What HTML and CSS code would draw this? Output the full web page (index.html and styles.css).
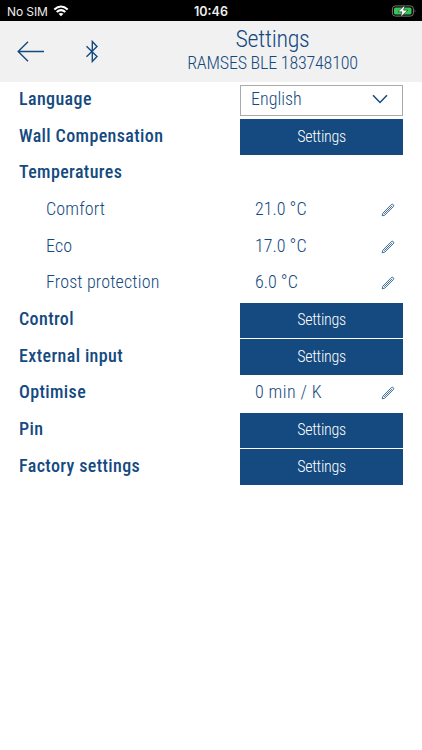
FILE: index.html
```html
<!DOCTYPE html>
<html lang="en">
<head>
  <meta charset="UTF-8" />
  <meta name="viewport" content="width=device-width, initial-scale=1.0"/>
  <title>Settings</title>
  <link rel="stylesheet" href="styles.css">
</head>
<body>
  <svg width="0" height="0" class="defs">
    <symbol id="pencil" viewBox="0 0 14 14">
      <path d="M1.2 12.8 L1.9 10.2 L10.3 1.6 Q11.3 .8 12.3 1.7 Q13.1 2.6 12.4 3.6 L3.8 12.1 Z M3.2 10.8 L11.2 2.9" />
    </symbol>
  </svg>

  <div class="statusbar">
    <div class="carrier">
      <span>No SIM</span>
      <svg class="wifi" width="16" height="12" viewBox="0 0 16 12">
        <path d="M1.3 4.5 Q8 -1.5 14.7 4.5 M3.7 7 Q8 3.2 12.3 7" />
        <path class="dot" d="M8 11.3 L5.5 8.8 Q8 7 10.5 8.8 Z" />
      </svg>
    </div>
    <div class="clock">10:46</div>
    <div class="battery">
      <svg width="26" height="12" viewBox="0 0 26 12">
        <rect class="case" x="1.4" y=".9" width="21" height="10.2" rx="3" />
        <rect class="charge" x="3" y="2.5" width="17.5" height="7" rx="1.5" />
        <path class="case-tip" d="M23.7 4.2 Q25.3 6 23.7 7.8 Z" />
        <path class="bolt" d="M14 0 L6.8 6.8 H10.9 L9.6 12 L16.8 5.2 H12.6 Z" />
      </svg>
    </div>
  </div>

  <div class="header">
    <svg class="back" width="28" height="22" viewBox="0 0 28 22">
      <path d="M27 10.5 H1.5 M11 .8 L1.2 10.5 L11 20.2" />
    </svg>
    <svg class="bluetooth" width="14" height="24" viewBox="0 0 14 24">
      <path d="M1.5 6.3 L12 16.5 L7.3 21.5 V1.5 L12 6.5 L1.5 16.7" />
    </svg>
    <div class="titles">
      <h1>Settings</h1>
      <p>RAMSES BLE 183748100</p>
    </div>
  </div>

  <div class="settings">
    <div class="row">
      <div class="label">Language</div>
      <div class="select">
        <span>English</span>
        <svg width="16" height="10" viewBox="0 0 16 10"><path d="M1 1.2 L8 8.4 L15 1.2" /></svg>
      </div>
    </div>
    <div class="row">
      <div class="label">Wall Compensation</div>
      <button>Settings</button>
    </div>
    <div class="row">
      <div class="label">Temperatures</div>
    </div>
    <div class="row">
      <div class="label sub">Comfort</div>
      <div class="value"><span>21.0 °C</span><svg width="14" height="14"><use href="#pencil" /></svg></div>
    </div>
    <div class="row">
      <div class="label sub">Eco</div>
      <div class="value"><span>17.0 °C</span><svg width="14" height="14"><use href="#pencil" /></svg></div>
    </div>
    <div class="row">
      <div class="label sub">Frost protection</div>
      <div class="value"><span>6.0 °C</span><svg width="14" height="14"><use href="#pencil" /></svg></div>
    </div>
    <div class="row">
      <div class="label">Control</div>
      <button>Settings</button>
    </div>
    <div class="row">
      <div class="label">External input</div>
      <button>Settings</button>
    </div>
    <div class="row">
      <div class="label">Optimise</div>
      <div class="value wide"><span>0 min / K</span><svg width="14" height="14"><use href="#pencil" /></svg></div>
    </div>
    <div class="row">
      <div class="label">Pin</div>
      <button>Settings</button>
    </div>
    <div class="row">
      <div class="label">Factory settings</div>
      <button>Settings</button>
    </div>
  </div>
</body>
</html>
```

FILE: styles.css
```css
* {
  box-sizing: border-box;
}
body {
  margin: 0;
  background: white;
  color: #144a80;
  font-family: Roboto, sans-serif;
  font-stretch: 75%;
}
svg {
  display: block;
  fill: none;
  stroke: #144a80;
}
.defs {
  position: absolute;
}
.statusbar {
  display: grid;
  grid-template-columns: 1fr auto 1fr;
  align-items: center;
  height: 21px;
  padding: 1px 5px 0 7px;
  background: black;
  color: #eee;
  font-family: Inter, sans-serif;
  font-size: 12px;
  font-stretch: normal;
}
.carrier {
  display: flex;
  align-items: center;
  gap: 5px;
  letter-spacing: -0.1px;
}
.wifi {
  stroke: white;
  stroke-width: 2.1;
}
.wifi .dot {
  fill: white;
  stroke: none;
}
.clock {
  padding-right: 2px;
  font-size: 12.5px;
  font-weight: 600;
}
.battery {
  justify-self: end;
}
.battery .case {
  stroke: #777;
}
.battery .charge {
  fill: #35c759;
  stroke: none;
}
.battery .case-tip {
  fill: #777;
  stroke: none;
}
.battery .bolt {
  fill: white;
  stroke: black;
  stroke-width: 0.5;
}
.header {
  display: flex;
  align-items: center;
  height: 61px;
  padding-left: 17px;
  background: #f1f1f1;
}
.back,
.bluetooth {
  stroke-width: 1.4;
}
.bluetooth {
  margin-left: 40px;
}
.titles {
  flex: 1;
  padding: 0 0 4px 24px;
  text-align: center;
}
.header h1,
.header p {
  margin: 0;
  font-weight: 300;
  white-space: nowrap;
}
.header h1 {
  font-size: 24px;
  line-height: 27px;
  letter-spacing: -0.3px;
}
.header p {
  font-size: 18px;
  line-height: 20px;
  letter-spacing: -0.2px;
}
.settings {
  padding: 0.3px 19px 0;
}
.row {
  display: grid;
  grid-template-columns: 221px 163px;
  align-items: center;
  height: 36.65px;
}
.label {
  padding-bottom: 4px;
  font-size: 18px;
  font-weight: 500;
  letter-spacing: 0.38px;
}
.label.sub {
  padding-left: 27px;
  font-weight: 300;
  letter-spacing: 0.15px;
}
.select {
  display: flex;
  align-items: center;
  justify-content: space-between;
  height: 31px;
  margin-bottom: 1px;
  padding: 0 14px 0 10px;
  border: 1px solid #aaa;
  font-size: 18px;
  font-weight: 300;
}
.select span {
  padding-bottom: 3px;
}
.select svg {
  margin-bottom: 2px;
  stroke-width: 1.5;
}
.value {
  display: flex;
  align-items: center;
  justify-content: space-between;
  padding: 0 8px 1px 15px;
  font-size: 18px;
  font-weight: 300;
}
.value span {
  padding-bottom: 3px;
}
.value.wide {
  letter-spacing: 0.4px;
}
.value svg {
  stroke-width: 0.8;
}
button {
  height: 35.6px;
  padding: 0 0 2px;
  border: none;
  background: #144a80;
  color: white;
  font: inherit;
  font-size: 16px;
  font-weight: 300;
  letter-spacing: -0.3px;
}
```
